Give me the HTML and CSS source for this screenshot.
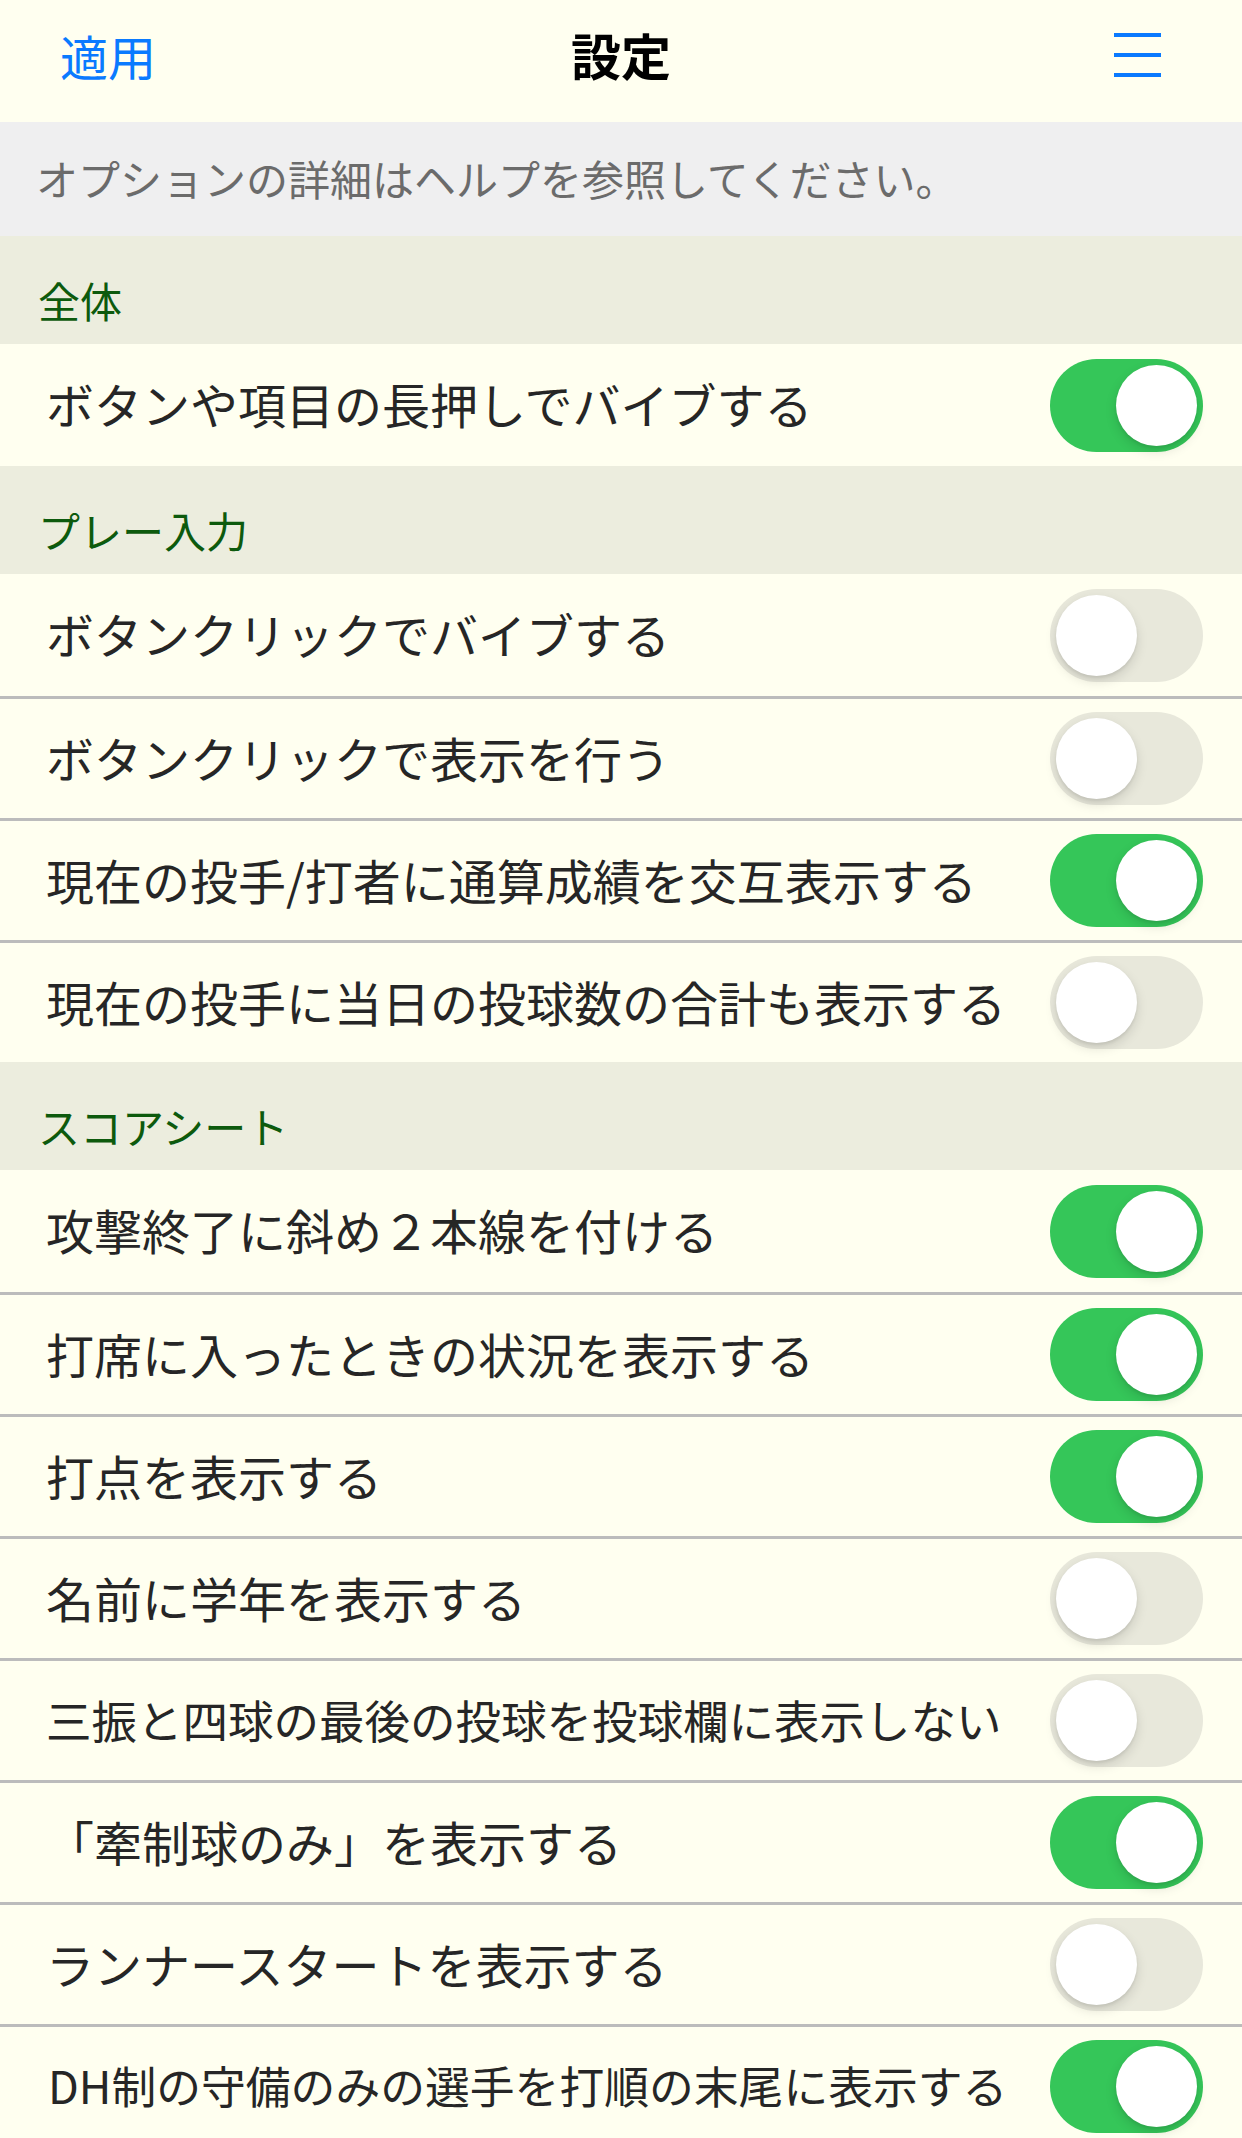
FILE: index.html
```html
<!DOCTYPE html>
<html lang="ja">
<head>
<meta charset="utf-8">
<title>設定</title>
<link rel="stylesheet" href="styles.css">
</head>
<body>
<div class="page">
  <header class="navbar">
    <span class="nav-apply">適用</span>
    <span class="nav-title">設定</span>
    <span class="nav-menu">
      <svg width="47" height="44" viewBox="0 0 47 44"><rect x="0" y="0" width="47" height="4" fill="#0a7aff"/><rect x="0" y="20" width="47" height="4" fill="#0a7aff"/><rect x="0" y="40" width="47" height="4" fill="#0a7aff"/></svg>
    </span>
  </header>

  <div class="info">オプションの詳細はヘルプを参照してください。</div>

  <div class="section-head">全体</div>
  <div class="group">
    <div class="row"><span class="label">ボタンや項目の長押しでバイブする</span><span class="switch on"><span class="knob"></span></span></div>
  </div>

  <div class="section-head">プレー入力</div>
  <div class="group">
    <div class="row"><span class="label">ボタンクリックでバイブする</span><span class="switch"><span class="knob"></span></span></div>
    <div class="row"><span class="label">ボタンクリックで表示を行う</span><span class="switch"><span class="knob"></span></span></div>
    <div class="row"><span class="label">現在の投手/打者に通算成績を交互表示する</span><span class="switch on"><span class="knob"></span></span></div>
    <div class="row"><span class="label">現在の投手に当日の投球数の合計も表示する</span><span class="switch"><span class="knob"></span></span></div>
  </div>

  <div class="section-head">スコアシート</div>
  <div class="group">
    <div class="row"><span class="label">攻撃終了に斜め２本線を付ける</span><span class="switch on"><span class="knob"></span></span></div>
    <div class="row"><span class="label">打席に入ったときの状況を表示する</span><span class="switch on"><span class="knob"></span></span></div>
    <div class="row"><span class="label">打点を表示する</span><span class="switch on"><span class="knob"></span></span></div>
    <div class="row"><span class="label">名前に学年を表示する</span><span class="switch"><span class="knob"></span></span></div>
    <div class="row"><span class="label label-fit">三振と四球の最後の投球を投球欄に表示しない</span><span class="switch"><span class="knob"></span></span></div>
    <div class="row"><span class="label">「牽制球のみ」を表示する</span><span class="switch on"><span class="knob"></span></span></div>
    <div class="row"><span class="label">ランナースタートを表示する</span><span class="switch"><span class="knob"></span></span></div>
    <div class="row"><span class="label label-fit-sm">DH制の守備のみの選手を打順の末尾に表示する</span><span class="switch on"><span class="knob"></span></span></div>
  </div>
</div>
</body>
</html>
```

FILE: styles.css
```css
html, body {
  margin: 0;
  padding: 0;
  background: #fffff0;
}

body {
  font-family: "Noto Sans CJK JP", "Noto Sans", sans-serif;
  color: #262626;
}

.page {
  width: 1242px;
  height: 2138px;
  overflow: hidden;
  background: #fffff0;
}

.navbar {
  height: 122px;
  box-sizing: border-box;
  display: grid;
  grid-template-columns: 1fr auto 1fr;
  align-items: start;
  padding: 31px 60px 0 60px;
  background: #fffff0;
}

.nav-apply {
  font-size: 48px;
  line-height: 48px;
  color: #0a7aff;
  justify-self: start;
}

.nav-title {
  font-size: 50px;
  line-height: 50px;
  font-weight: 700;
  color: #000;
  margin-top: -2px;
}

.nav-menu {
  justify-self: end;
  margin-right: 21px;
  padding-top: 2px;
}

.nav-menu svg {
  display: block;
}

.info {
  height: 114px;
  box-sizing: border-box;
  background: #efeff0;
  color: #6b6b6b;
  font-size: 42px;
  line-height: 42px;
  padding: 35px 0 0 36px;
}

.section-head {
  height: 108px;
  box-sizing: border-box;
  background: #ecedde;
  color: #0d5a0d;
  font-size: 42px;
  line-height: 42px;
  padding: 43px 0 0 38px;
}

.row {
  height: 122px;
  box-sizing: border-box;
  display: flex;
  align-items: center;
  justify-content: space-between;
  padding: 0 39px 4px 46px;
  background: #fffff0;
}

.row + .row {
  border-top: 3px solid #bcbcbc;
}

.row .switch {
  margin-top: 4px;
}

.label {
  font-size: 48px;
  line-height: 48px;
  color: #262626;
  white-space: nowrap;
}

.label-fit {
  font-size: 45.5px;
}

.label-fit-sm {
  font-size: 44.8px;
  padding-left: 2px;
}

.switch {
  flex: none;
  width: 153px;
  height: 93px;
  box-sizing: border-box;
  border-radius: 47px;
  padding: 6px;
  display: flex;
  justify-content: flex-start;
  background: #e8e8db;
}

.switch.on {
  background: #35c659;
  justify-content: flex-end;
}

.knob {
  width: 81px;
  height: 81px;
  border-radius: 50%;
  background: #fff;
  box-shadow: 0 5px 12px rgba(0, 0, 0, 0.13), 0 2px 3px rgba(0, 0, 0, 0.07);
}
```
